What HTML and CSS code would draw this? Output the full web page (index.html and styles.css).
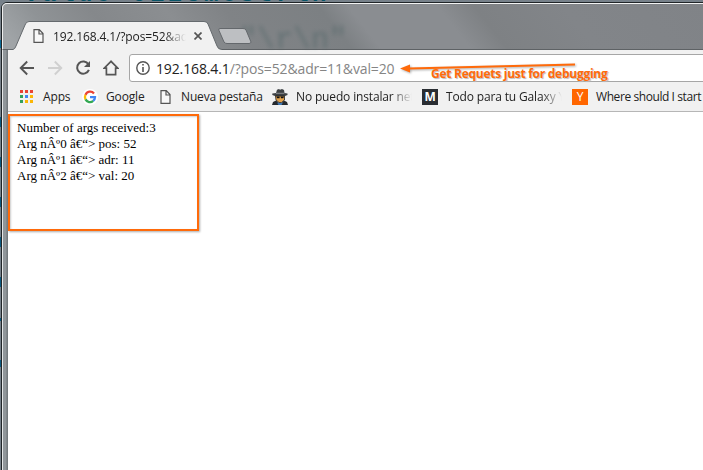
FILE: index.html
```
<!DOCTYPE html>
<html lang="es">
<head>
<meta charset="utf-8">
<title>192.168.4.1/?pos=52&amp;adr=11&amp;val=20</title>
<link rel="stylesheet" href="styles.css">
</head>
<body>
<div class="desktop">
  <div class="code-top" aria-hidden="true">Value=0123mostrln</div>
  <div class="window">
    <header class="titlebar">
      <div class="glass-text" aria-hidden="true">"\r\n"</div>
      <svg class="tab-shape" width="238" height="29" viewBox="0 0 238 29">
        <path d="M-6 28.5H-1Q1 28 2 25L11 4Q12 .5 15 .5H190Q193 .5 194 3L203 25Q204 28.5 208 28.5V29H-6Z" fill="#f1f1f1"/>
        <path d="M-6 28.5H-1Q1 28 2 25L11 4Q12 .5 15 .5H190Q193 .5 194 3L203 25Q204 28.5 208 28.5" fill="none" stroke="#656a6e"/>
        <path d="M206 7.5H229Q231 7.5 232 9L237 21Q237 22.5 235 22.5H213Q211 22.5 210 21L205 9.5Q204 7.5 206 7.5Z" fill="#bdbfc2" stroke="#64686c"/>
      </svg>
      <div class="tab">
        <svg class="tab-page" width="11" height="14" viewBox="0 0 11 14"><path d="M1 .7H6.3L10 4.5V13.3H1ZM6 1V5H10" fill="#f8f8f8" stroke="#555" stroke-width="1.2"/></svg>
        <span class="tab-title">192.168.4.1/?pos=52&amp;adr</span>
        <svg class="close" width="8" height="8" viewBox="0 0 8 8"><path d="M.5.5 7.5 7.5M7.5.5.5 7.5" stroke="#555" stroke-width="1.7"/></svg>
      </div>
    </header>
    <div class="toolbar">
      <nav class="nav">
        <svg width="16" height="16" viewBox="0 0 16 16"><path d="M15 8H2M8.2 1.5 1.7 8l6.5 6.5" fill="none" stroke="#555" stroke-width="1.9"/></svg>
        <svg width="16" height="16" viewBox="0 0 16 16"><path d="M1 8H14M7.8 1.5 14.3 8l-6.5 6.5" fill="none" stroke="#d0d0d0" stroke-width="1.9"/></svg>
        <svg width="16" height="16" viewBox="0 0 16 16"><path d="M13.4 4.3A6.1 6.1 0 1 0 13.9 9.8" fill="none" stroke="#555" stroke-width="2"/><path d="M15 1V7H9Z" fill="#555"/></svg>
        <svg width="16" height="16" viewBox="0 0 16 16"><path d="M8 1.3 1.2 8.2H3.4V14.7H12.6V8.2H14.8Z" fill="none" stroke="#555" stroke-width="1.7"/></svg>
      </nav>
      <div class="omnibox">
        <svg width="14" height="14" viewBox="0 0 14 14"><circle cx="7" cy="7" r="6.2" fill="none" stroke="#555" stroke-width="1.4"/><path d="M7 3V4.6M7 6V11" stroke="#555" stroke-width="1.6"/></svg>
        <span class="url"><b>192.168.4.1</b>/?pos=52&amp;adr=11&amp;val=20</span>
      </div>
    </div>
    <div class="bookmarks">
      <div class="bm apps"><svg width="14" height="14" viewBox="0 0 14 14"><path d="M0 0h3v3H0zM5 0h3v3H5zM10 0h3v3h-3z" fill="#ea4335"/><path d="M0 5h3v3H0zM0 10h3v3H0z" fill="#34a05a"/><path d="M5 5h3v3H5z" fill="#4285f4"/><path d="M10 5h3v3h-3zM5 10h3v3H5zM10 10h3v3h-3z" fill="#fbb605"/></svg><span>Apps</span></div>
      <div class="bm google"><svg width="16" height="16" viewBox="0 0 16 16"><circle cx="8" cy="8" r="8" fill="#fff"/><g fill="none" stroke-width="2.3"><path d="M12 4.4A5 5 0 0 0 3.5 5.8" stroke="#ea4335"/><path d="M3.5 5.8A5 5 0 0 0 3.5 10.4" stroke="#fbbc05"/><path d="M3.5 10.4A5 5 0 0 0 11.2 11.9" stroke="#34a853"/><path d="M11.2 11.9A5 5 0 0 0 13 8.2H8" stroke="#4285f4"/></g></svg><span>Google</span></div>
      <div class="bm nueva"><svg width="11" height="14" viewBox="0 0 11 14"><path d="M1 .7H6.3L10 4.5V13.3H1ZM6 1V5H10" fill="#f8f8f8" stroke="#555" stroke-width="1.2"/></svg><span>Nueva pestaña</span></div>
      <div class="bm puedo"><svg width="16" height="16" viewBox="0 0 16 16"><path d="M4 4 5 .7 7 0 8 .8 10 0 12 1 12.5 4 15.5 4.5V6L13 7H3L.3 6V4.5Z" fill="#3d4144"/><path d="M4 4.3H12.4" stroke="#8a8d90"/><path d="M3.5 7H12.5V11L9.5 13.5H7L4 11Z" fill="#e2a24c" stroke="#222" stroke-width=".8"/><path d="M4.5 7.5H7.6V9.3H5ZM8.6 7.5H12L11.3 9.3H9Z" fill="#111"/><path d="M0 16 1 13 4 11.5 7 14H9.5L12 11.5 15 13 16 16Z" fill="#25292d"/><path d="M5 13.5 7 14H9.5L11 13.5 9.5 16H6.5Z" fill="#3e78b4"/></svg><span class="fade">No puedo instalar net</span></div>
      <div class="bm todo"><i class="badge dark">M</i><span class="fade">Todo para tu Galaxy Y</span></div>
      <div class="bm where"><i class="badge orange">Y</i><span>Where should I start</span></div>
    </div>
    <main class="page">
      <div class="output">Number of args received:3<br>Arg nÂº0 â€“&gt; pos: 52<br>Arg nÂº1 â€“&gt; adr: 11<br>Arg nÂº2 â€“&gt; val: 20</div>
    </main>
  </div>
  <svg class="arrow" width="180" height="14" viewBox="0 0 180 14"><path d="M9 8.5 175 4.5" stroke="#ff6a0a" stroke-width="2"/><path d="M0 8.5 10 4.5V12.5Z" fill="#ff6a0a"/></svg>
  <div class="note">Get Requets just for debugging</div>
</div>
</body>
</html>
```
FILE: styles.css
```
* { box-sizing: border-box; }
body { margin: 0; overflow: hidden; background: #77818a; font-family: "Open Sans", "Noto Sans", sans-serif; }
svg { display: block; flex: none; }
.desktop {
  position: relative; width: 703px; height: 470px; overflow: hidden; padding: 2px 0 0 1px;
  background: linear-gradient(#0b6a94 0 0) 0 40px / 2px 8px no-repeat,
    linear-gradient(#0b5a80 0 0) 0 117px / 2px 10px no-repeat,
    linear-gradient(#0b5a80 0 0) 0 157px / 2px 10px no-repeat,
    linear-gradient(#0b5a80 0 0) 0 197px / 2px 10px no-repeat,
    linear-gradient(#0b5a80 0 0) 0 237px / 2px 10px no-repeat,
    linear-gradient(#0b5a80 0 0) 0 277px / 2px 10px no-repeat,
    linear-gradient(#0b5a80 0 0) 0 318px / 2px 3px no-repeat,
    linear-gradient(#0b5a80 0 0) 0 360px / 2px 7px no-repeat, #77818a;
}
.code-top { position: absolute; left: 24px; top: -16px; height: 22px; color: #075568; font: bold 24px/22px "Liberation Mono", monospace; letter-spacing: 3.6px; }
.window {
  position: relative; width: 710px; height: 480px; padding-left: 4px;
  border: 1px solid #202528; border-radius: 6px 0 0 0;
  box-shadow: inset 1px 1px #e5e7e8;
  background: linear-gradient(90deg, #edf0f1 0 1px, #90969a 1px 4px, #73797d 5px);
}
.titlebar {
  position: relative; height: 47px; margin: 0 0 0 -4px; padding: 19px 0 0 13px;
  border-top: 1px solid #f2f3f3; border-bottom: 1px solid #5e6265; border-left: 1px solid #eee; border-radius: 5px 0 0 0;
  background: linear-gradient(52deg, #a0a4a7 0 2%, #8f9396 8%, #85888b 16%, #8b8e91 26%, #808386 34%, #7c8083 47%, #8a8d91 51% 63%, #7e8184 68%, #828589 80%, #808387);
}
.glass-text { position: absolute; left: 236px; top: 21px; color: #4e6466; opacity: .55; filter: blur(2px); font: 30px/30px "Liberation Mono", monospace; }
.tab-shape { position: absolute; left: 11px; top: 17px; overflow: visible; }
.tab { position: relative; display: flex; align-items: center; width: 190px; height: 26px; padding-left: 17px; }
.tab-title {
  width: 133px; margin-left: 9px; overflow: hidden; white-space: nowrap; color: #222; font-size: 12px; letter-spacing: -.12px;
  mask-image: linear-gradient(90deg, #000 83%, transparent);
}
.close { margin-left: 8px; }
.toolbar { height: 34px; display: flex; align-items: flex-start; padding: 4px 0 0 13px; margin-left: 2px; background: #f1f1f1; }
.nav { flex: none; width: 110px; padding: 6px 0 0; display: flex; gap: 12px; margin-left: -2px; }
.omnibox { flex: none; display: flex; align-items: center; height: 28px; width: 600px; border: 1px solid #a6a6a6; border-radius: 3px; background: #fff; padding-left: 6px; }
.url { margin-left: 6px; color: #858585; font-size: 14px; letter-spacing: -.13px; white-space: nowrap; }
.url b { color: #222; font-weight: 400; }
.bookmarks { height: 28px; margin-left: 2px; display: flex; align-items: center; background: #f1f1f1; border-bottom: 1px solid #b6b6b6; padding: 0 0 2px 12px; font-size: 12px; color: #222; }
.bm { display: flex; align-items: center; flex: none; gap: 8px; white-space: nowrap; letter-spacing: -.15px; }
.apps { width: 62px; gap: 9px; }
.google { width: 78px; }
.nueva { width: 112px; gap: 10px; }
.puedo { width: 150px; }
.todo { width: 150px; }
.where { letter-spacing: -.42px; }
.fade { width: 116px; overflow: hidden; mask-image: linear-gradient(90deg, #000 82%, transparent); }
.badge { width: 16px; height: 16px; color: #fff; font: normal 12px/16px "Open Sans", sans-serif; text-align: center; }
.dark { background: #292d32; font-weight: 700; }
.orange { background: #ff6600; }
.page { height: 370px; margin-left: 2px; background: #fff; padding-top: 2px; }
.output { width: 191px; height: 117px; border: 2px solid #ff6a0a; padding: 4px 7px; color: #000; font: 13px/16px "Liberation Serif", serif; box-shadow: 1px 1px 2px #aaa, inset 1px 1px 2px #ccc; white-space: nowrap; }
.arrow { position: absolute; left: 400px; top: 60px; filter: drop-shadow(1px 1px 1px #aaa); }
.note { position: absolute; left: 431px; top: 66px; color: #ff6a0a; font: bold 12px/16px "Open Sans", sans-serif; letter-spacing: -.27px; text-shadow: 1px 1px 1px #bbb; white-space: nowrap; }
```
